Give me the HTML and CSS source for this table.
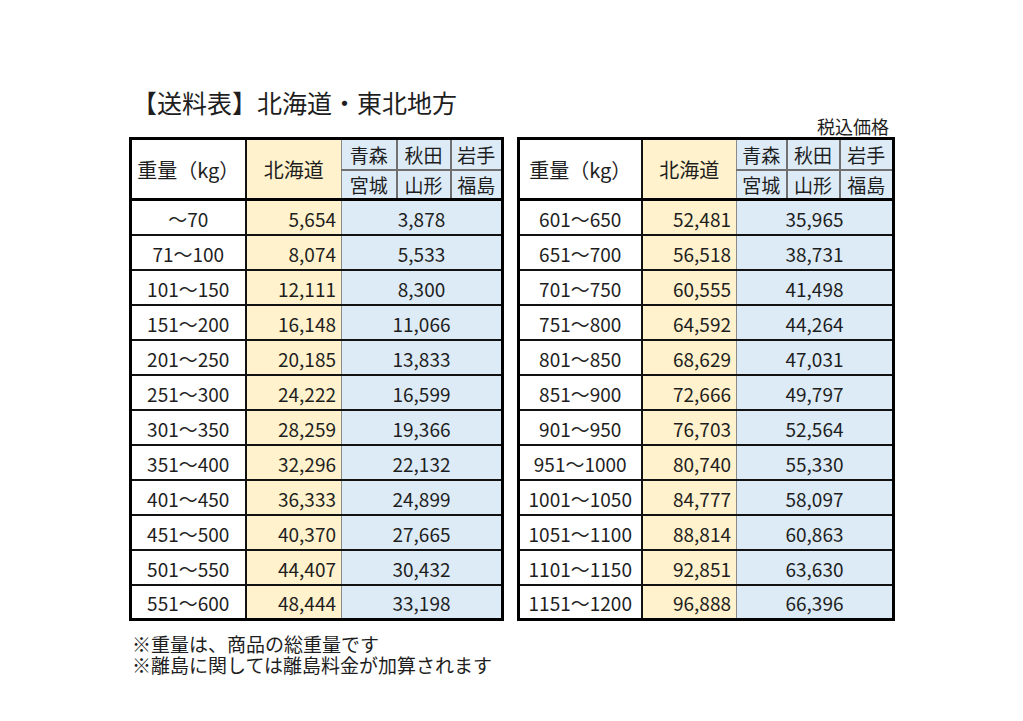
FILE: index.html
```html
<!DOCTYPE html>
<html lang="ja">
<head>
<meta charset="utf-8">
<title>送料表</title>
<link rel="stylesheet" href="styles.css">
</head>
<body>
<div class="page">
  <h1 class="title">【送料表】北海道・東北地方</h1>
  <div class="grid">
    <div class="label-spacer"></div>
    <div class="label">税込価格</div>

    <table class="rate rate-left">
      <colgroup>
        <col class="c1"><col class="c2"><col class="s1"><col class="s2"><col class="s3">
      </colgroup>
      <thead>
        <tr class="h1">
          <th rowspan="2" class="w head">重量（kg）</th>
          <th rowspan="2" class="y head">北海道</th>
          <th class="hb first">青森</th><th class="hb">秋田</th><th class="hb">岩手</th>
        </tr>
        <tr class="h2">
          <th class="hb first">宮城</th><th class="hb">山形</th><th class="hb">福島</th>
        </tr>
      </thead>
      <tbody>
        <tr><td class="w">～70</td><td class="y">5,654</td><td class="b" colspan="3">3,878</td></tr>
        <tr><td class="w">71～100</td><td class="y">8,074</td><td class="b" colspan="3">5,533</td></tr>
        <tr><td class="w">101～150</td><td class="y">12,111</td><td class="b" colspan="3">8,300</td></tr>
        <tr><td class="w">151～200</td><td class="y">16,148</td><td class="b" colspan="3">11,066</td></tr>
        <tr><td class="w">201～250</td><td class="y">20,185</td><td class="b" colspan="3">13,833</td></tr>
        <tr><td class="w">251～300</td><td class="y">24,222</td><td class="b" colspan="3">16,599</td></tr>
        <tr><td class="w">301～350</td><td class="y">28,259</td><td class="b" colspan="3">19,366</td></tr>
        <tr><td class="w">351～400</td><td class="y">32,296</td><td class="b" colspan="3">22,132</td></tr>
        <tr><td class="w">401～450</td><td class="y">36,333</td><td class="b" colspan="3">24,899</td></tr>
        <tr><td class="w">451～500</td><td class="y">40,370</td><td class="b" colspan="3">27,665</td></tr>
        <tr><td class="w">501～550</td><td class="y">44,407</td><td class="b" colspan="3">30,432</td></tr>
        <tr><td class="w">551～600</td><td class="y">48,444</td><td class="b" colspan="3">33,198</td></tr>
      </tbody>
    </table>

    <table class="rate rate-right">
      <colgroup>
        <col class="c1"><col class="c2"><col class="s1"><col class="s2"><col class="s3">
      </colgroup>
      <thead>
        <tr class="h1">
          <th rowspan="2" class="w head">重量（kg）</th>
          <th rowspan="2" class="y head">北海道</th>
          <th class="hb first">青森</th><th class="hb">秋田</th><th class="hb">岩手</th>
        </tr>
        <tr class="h2">
          <th class="hb first">宮城</th><th class="hb">山形</th><th class="hb">福島</th>
        </tr>
      </thead>
      <tbody>
        <tr><td class="w">601～650</td><td class="y">52,481</td><td class="b" colspan="3">35,965</td></tr>
        <tr><td class="w">651～700</td><td class="y">56,518</td><td class="b" colspan="3">38,731</td></tr>
        <tr><td class="w">701～750</td><td class="y">60,555</td><td class="b" colspan="3">41,498</td></tr>
        <tr><td class="w">751～800</td><td class="y">64,592</td><td class="b" colspan="3">44,264</td></tr>
        <tr><td class="w">801～850</td><td class="y">68,629</td><td class="b" colspan="3">47,031</td></tr>
        <tr><td class="w">851～900</td><td class="y">72,666</td><td class="b" colspan="3">49,797</td></tr>
        <tr><td class="w">901～950</td><td class="y">76,703</td><td class="b" colspan="3">52,564</td></tr>
        <tr><td class="w">951～1000</td><td class="y">80,740</td><td class="b" colspan="3">55,330</td></tr>
        <tr><td class="w">1001～1050</td><td class="y">84,777</td><td class="b" colspan="3">58,097</td></tr>
        <tr><td class="w">1051～1100</td><td class="y">88,814</td><td class="b" colspan="3">60,863</td></tr>
        <tr><td class="w">1101～1150</td><td class="y">92,851</td><td class="b" colspan="3">63,630</td></tr>
        <tr><td class="w">1151～1200</td><td class="y">96,888</td><td class="b" colspan="3">66,396</td></tr>
      </tbody>
    </table>
  </div>
  <div class="notes">
    <p>※重量は、商品の総重量です</p>
    <p>※離島に関しては離島料金が加算されます</p>
  </div>
</div>
</body>
</html>
```

FILE: styles.css
```css
html, body {
  margin: 0;
  padding: 0;
  background: #ffffff;
}

body {
  font-family: "Noto Sans CJK JP", "Noto Sans", sans-serif;
  color: #1e1e1e;
}

.page {
  padding: 88px 0 0 129px;
}

.title {
  margin: 0;
  padding-left: 3px;
  font-size: 25px;
  line-height: 28px;
  font-weight: 400;
}

.grid {
  display: grid;
  grid-template-columns: auto auto;
  column-gap: 13px;
  justify-content: start;
}

.label {
  font-size: 18px;
  line-height: 21px;
  height: 21px;
  text-align: right;
  padding-right: 6px;
}

.rate {
  border-collapse: collapse;
  table-layout: fixed;
  border: 3px solid #000;
}

.rate th,
.rate td {
  border: 2px solid #111;
  padding: 0;
  font-weight: 400;
  white-space: nowrap;
  overflow: hidden;
}

.rate-left .c1 { width: 115px; }
.rate-left .c2 { width: 96px; }
.rate-left .s1 { width: 55px; }
.rate-left .s2 { width: 54px; }
.rate-left .s3 { width: 52px; }

.rate-right .c1 { width: 123px; }
.rate-right .c2 { width: 95px; }
.rate-right .s1 { width: 50px; }
.rate-right .s2 { width: 53px; }
.rate-right .s3 { width: 54px; }

.rate .h1 { height: 31px; }
.rate .h2 { height: 30px; }

.rate .head {
  font-size: 20px;
  border-bottom: 3px solid #000;
}

.rate .hb {
  background: #ddebf7;
  font-size: 19px;
  border: 2px solid #707070;
}

.rate .h2 .hb {
  border-bottom: 3px solid #000;
}

.rate .hb.first {
  border-left: 1px solid #8a8a8a;
}

.rate tbody tr { height: 35px; }

.rate td {
  font-size: 19px;
  padding-top: 2px;
}

.rate .w {
  background: #ffffff;
  text-align: center;
}

.rate .y {
  background: #fff2cc;
  border-right: 1px solid #8a8a8a;
}

.rate td.y {
  text-align: right;
  padding-right: 5px;
}

.rate .b {
  background: #ddebf7;
  text-align: center;
  border-left: 1px solid #8a8a8a;
}

.notes {
  margin-top: 12px;
  padding-left: 3px;
  font-size: 19px;
  line-height: 21px;
}

.notes p {
  margin: 0;
}
```
